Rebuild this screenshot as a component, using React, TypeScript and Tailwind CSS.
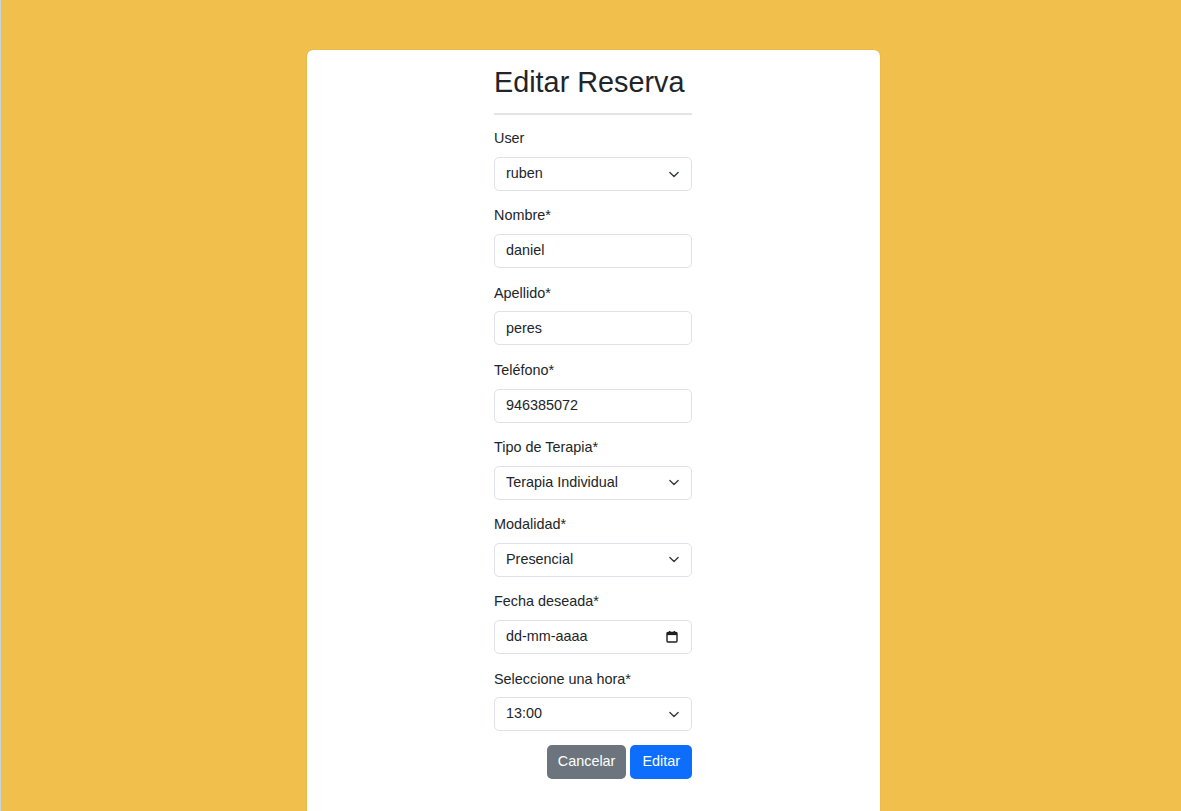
import React from "react";

const Chevron = () => (
  <svg width="14" height="11" viewBox="0 0 16 16" className="shrink-0">
    <path d="m2 5 6 6 6-6" fill="none" stroke="#343a40" strokeWidth="2" strokeLinecap="round" strokeLinejoin="round" />
  </svg>
);

const Calendar = () => (
  <svg width="12" height="12" viewBox="0 0 12 12" className="shrink-0">
    <rect x="1" y="1.5" width="10" height="9.5" rx="1" fill="none" stroke="#1f1f1f" strokeWidth="1.4" />
    <rect x="1" y="1.5" width="10" height="2.6" fill="#1f1f1f" />
    <rect x="3" y="0" width="1.4" height="2" fill="#1f1f1f" />
    <rect x="7.6" y="0" width="1.4" height="2" fill="#1f1f1f" />
  </svg>
);

type FieldProps = { label: string; value: string; kind?: "text" | "select" | "date" };

const Field = ({ label, value, kind = "text" }: FieldProps) => (
  <div className="mb-[14.4px] last:mb-[13.4px]">
    <div className="h-[21.6px] leading-[21.6px] mb-[7.2px]">{label}</div>
    <div
      className={
        kind === "date"
          ? "h-[34px] border border-[#dee2e6] rounded-[5px] bg-white pl-[11px] pr-[13px] flex items-center justify-between"
          : "h-[34px] border border-[#dee2e6] rounded-[5px] bg-white pl-[11px] pr-[10px] flex items-center justify-between"
      }
    >
      <span>{value}</span>
      {kind === "select" && <Chevron />}
      {kind === "date" && <Calendar />}
    </div>
  </div>
);

export default function App() {
  return (
    <div
      className="h-[811px] overflow-hidden bg-[#f0bf4c] border-l border-[#c9d3db] text-[#212529] text-[14.4px]"
      style={{ fontFamily: '"Liberation Sans", Arial, sans-serif' }}
    >
      <div className="mt-[50px] ml-[306px] w-[573px] h-[800px] bg-white rounded-[6px] shadow-[0_0_1px_rgba(0,0,0,0.25)] pt-[15px]">
        <div className="w-[198px] ml-[187px]">
          <h2 className="text-[28.8px] leading-[34.5px] h-[34.5px] font-normal">Editar Reserva</h2>
          <div className="mt-[13.5px] h-[2px] bg-[#e4e4e4]" />
          <div className="mt-[13.3px]">
            <Field label="User" value="ruben" kind="select" />
            <Field label="Nombre*" value="daniel" />
            <Field label="Apellido*" value="peres" />
            <Field label="Teléfono*" value="946385072" />
            <Field label="Tipo de Terapia*" value="Terapia Individual" kind="select" />
            <Field label="Modalidad*" value="Presencial" kind="select" />
            <Field label="Fecha deseada*" value="dd-mm-aaaa" kind="date" />
            <Field label="Seleccione una hora*" value="13:00" kind="select" />
          </div>
          <div className="flex justify-end gap-[4px]">
            <button className="h-[34px] px-[11px] rounded-[5px] bg-[#6c757d] text-white">Cancelar</button>
            <button className="h-[34px] px-[12px] rounded-[5px] bg-[#0d6efd] text-white">Editar</button>
          </div>
        </div>
      </div>
    </div>
  );
}
